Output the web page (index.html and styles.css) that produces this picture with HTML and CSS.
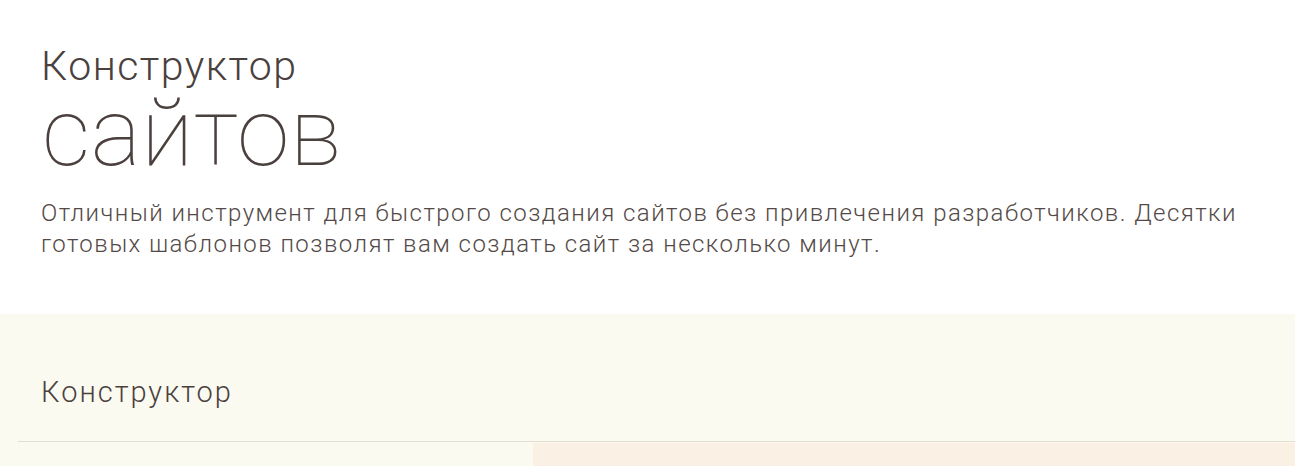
FILE: index.html
```html
<!DOCTYPE html>
<html lang="ru">
<head>
	<meta charset="UTF-8">
	<title>Конструктор сайтов</title>
	<link rel="stylesheet" href="styles.css">
</head>
<body>
	<header class="intro">
		<h1 class="intro_title"><span class="intro_small">Конструктор</span><span class="intro_big">сайтов</span></h1>
		<p class="intro_text">Отличный инструмент для быстрого создания сайтов без привлечения разработчиков. Десятки готовых шаблонов позволят вам создать сайт за несколько минут.</p>
	</header>
	<section class="builder">
		<h2 class="builder_title">Конструктор</h2>
		<div class="builder_body">
			<div class="builder_side"></div>
			<div class="builder_panel"></div>
		</div>
	</section>
</body>
</html>
```
FILE: styles.css
```css
* {margin:0; padding:0; box-sizing:border-box;}
body {background:#fff; color:#4a403e; font-family:Roboto, "Liberation Sans", sans-serif; font-weight:300; height:466px; overflow:hidden;}
.intro {padding:42px 41px 0;}
.intro_title {font-weight:300;}
.intro_small {display:block; font-size:41px; line-height:48px; letter-spacing:1.5px;}
.intro_big {display:block; font-size:95px; line-height:85px; font-weight:100; letter-spacing:0.5px; margin-left:1px;}
.intro_text {font-size:24px; line-height:31px; letter-spacing:1.45px; margin-top:23px; max-width:1230px; color:#534946;}
.builder {background:#fbfaf0; margin-top:54px; height:152px;}
.builder_title {font-weight:300; font-size:29px; line-height:34px; letter-spacing:2px; padding:61px 41px 0; height:127px;}
.builder_body {display:flex; margin-left:18px; border-top:1px solid #e1ded2; height:25px;}
.builder_side {width:515px;}
.builder_panel {flex:1; background:#faf1e4; margin-top:1px;}
```
